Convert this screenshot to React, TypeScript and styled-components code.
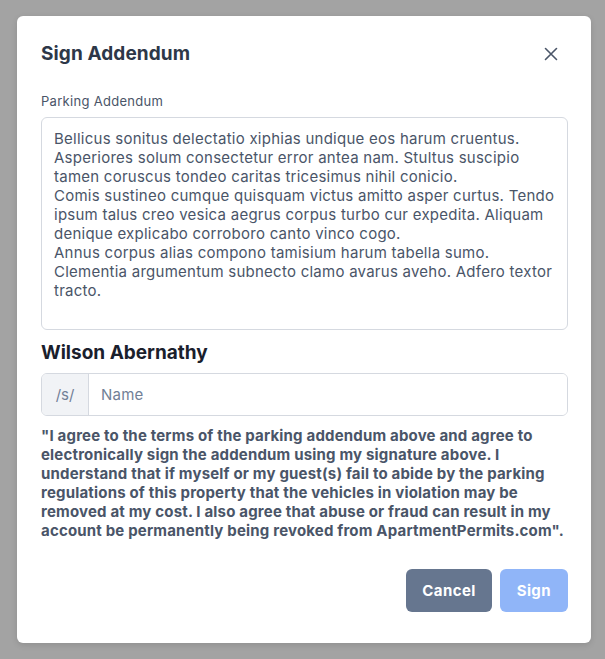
import { useState } from "react";
import styled, { createGlobalStyle } from "styled-components";

const GlobalStyle = createGlobalStyle`
  html, body {
    margin: 0;
    padding: 0;
    background: #a3a3a3;
  }
  body {
    font-family: Inter, "Noto Sans", sans-serif;
  }
  * {
    box-sizing: border-box;
  }
`

const Backdrop = styled.div`
  width: 605px;
  height: 659px;
  padding: 16px 14px 16px 17px;
`

const Modal = styled.div`
  width: 574px;
  height: 627px;
  background-color: #ffffff;
  border-radius: 6px;
  box-shadow: 0 2px 6px rgba(0, 0, 0, 0.12);
  padding: 24px 23px 31px 24px;
  display: flex;
  flex-direction: column;
`

const Header = styled.div`
  display: flex;
  align-items: center;
  justify-content: space-between;
  height: 28px;
`

const Title = styled.h2`
  margin: 0;
  font-size: 19px;
  font-weight: 700;
  color: #2d3748;
  line-height: 28px;
  letter-spacing: 0.1px;
`

const CloseButton = styled.button`
  border: none;
  background: none;
  padding: 0;
  width: 24px;
  height: 24px;
  margin-right: 5px;
  display: flex;
  align-items: center;
  justify-content: center;
  cursor: pointer;
  color: #4a5568;
`

const Label = styled.label`
  display: block;
  margin-top: 23px;
  margin-bottom: 6px;
  font-size: 13px;
  line-height: 20px;
  letter-spacing: 0.3px;
  color: #4a5568;
`

const Addendum = styled.textarea`
  width: 100%;
  height: 213px;
  resize: none;
  border: 1px solid #d5d9e0;
  border-radius: 6px;
  padding: 11px 12px;
  font-family: inherit;
  font-size: 15px;
  line-height: 19px;
  letter-spacing: 0.25px;
  color: #4a5568;
  outline: none;
  overflow: hidden;
`

const SignerName = styled.h3`
  margin: 9px 0 6px;
  font-size: 19px;
  line-height: 28px;
  font-weight: 700;
  color: #1a202c;
`

const InputGroup = styled.div`
  display: flex;
  height: 43px;
  border: 1px solid #d5d9e0;
  border-radius: 6px;
  overflow: hidden;
`

const Addon = styled.span`
  width: 47px;
  display: flex;
  align-items: center;
  justify-content: center;
  background-color: #f1f3f6;
  border-right: 1px solid #d5d9e0;
  font-size: 15px;
  color: #718096;
`

const NameInput = styled.input`
  flex: 1;
  border: none;
  outline: none;
  padding: 0 12px;
  font-family: inherit;
  font-size: 15px;
  letter-spacing: 0.25px;
  color: #2d3748;
  &::placeholder {
    color: #718096;
  }
`

const Agreement = styled.p`
  margin: 10px 0 0;
  font-size: 15px;
  line-height: 19px;
  font-weight: 700;
  letter-spacing: 0.18px;
  color: #4a5568;
`

const Footer = styled.div`
  margin-top: auto;
  display: flex;
  justify-content: flex-end;
  gap: 8px;
`

const Button = styled.button<{ $variant: "secondary" | "primary" }>`
  height: 43px;
  padding: 0 ${(p) => (p.$variant === "primary" ? "17px" : "16px")};
  border: none;
  border-radius: 6px;
  font-family: inherit;
  font-size: 15px;
  font-weight: 700;
  letter-spacing: 0.4px;
  color: #ffffff;
  background-color: ${(p) => (p.$variant === "primary" ? "#90b5f8" : "#66768f")};
  cursor: ${(p) => (p.$variant === "primary" ? "not-allowed" : "pointer")};
`

const addendumText = `Bellicus sonitus delectatio xiphias undique eos harum cruentus. Asperiores solum consectetur error antea nam. Stultus suscipio tamen coruscus tondeo caritas tricesimus nihil conicio.
Comis sustineo cumque quisquam victus amitto asper curtus. Tendo ipsum talus creo vesica aegrus corpus turbo cur expedita. Aliquam denique explicabo corroboro canto vinco cogo.
Annus corpus alias compono tamisium harum tabella sumo. Clementia argumentum subnecto clamo avarus aveho. Adfero textor tracto.`

export default function App() {
  const [name, setName] = useState("")

  return (
    <>
      <GlobalStyle />
      <Backdrop>
        <Modal>
          <Header>
            <Title>Sign Addendum</Title>
            <CloseButton aria-label="Close">
              <svg width="14" height="14" viewBox="0 0 14 14" fill="none" stroke="currentColor" strokeWidth="1.6" strokeLinecap="round">
                <path d="M1.5 1.5l11 11M12.5 1.5l-11 11" />
              </svg>
            </CloseButton>
          </Header>
          <Label>Parking Addendum</Label>
          <Addendum readOnly value={addendumText} />
          <SignerName>Wilson Abernathy</SignerName>
          <InputGroup>
            <Addon>/s/</Addon>
            <NameInput placeholder="Name" value={name} onChange={(e) => setName(e.target.value)} />
          </InputGroup>
          <Agreement>
            "I agree to the terms of the parking addendum above and agree to electronically sign the addendum using my signature above. I understand that if myself or my guest(s) fail to abide by the parking regulations of this property that the vehicles in violation may be removed at my cost. I also agree that abuse or fraud can result in my account be permanently being revoked from ApartmentPermits.com".
          </Agreement>
          <Footer>
            <Button $variant="secondary">Cancel</Button>
            <Button $variant="primary" disabled={!name}>Sign</Button>
          </Footer>
        </Modal>
      </Backdrop>
    </>
  )
}
